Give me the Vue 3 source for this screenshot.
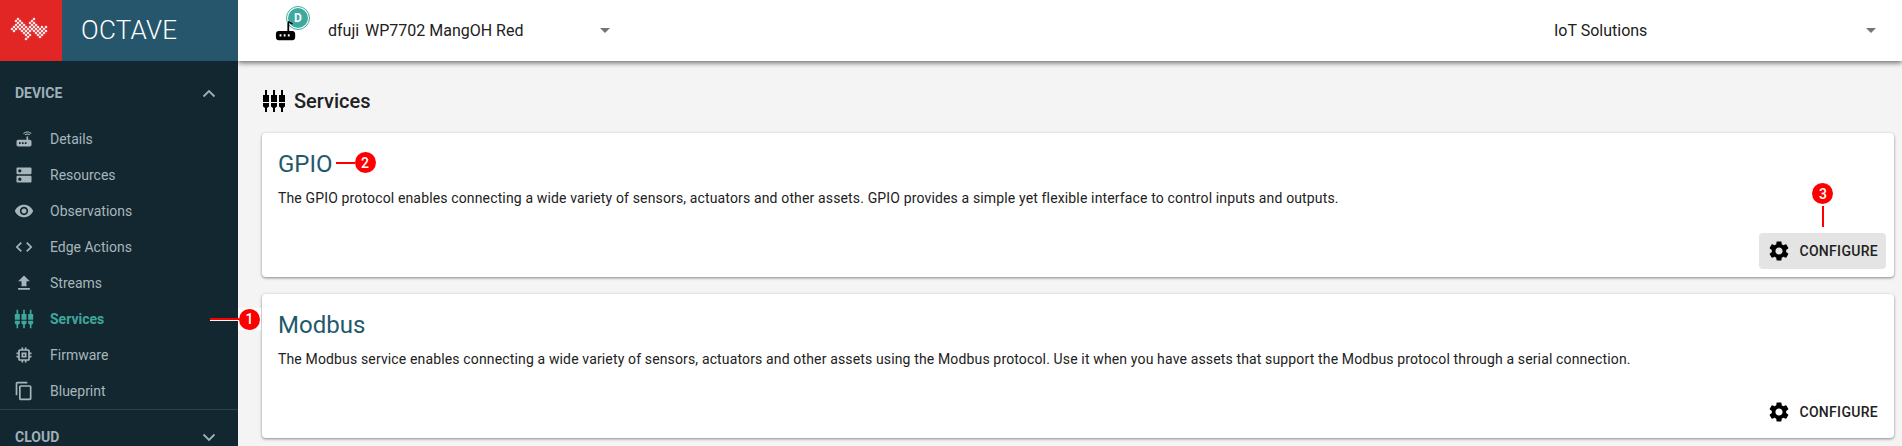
<script setup>
const deviceItems = [
  { label: 'Details', icon: 'router' },
  { label: 'Resources', icon: 'dns' },
  { label: 'Observations', icon: 'eye' },
  { label: 'Edge Actions', icon: 'code' },
  { label: 'Streams', icon: 'upload' },
  { label: 'Services', icon: 'services', active: true },
  { label: 'Firmware', icon: 'chip' },
  { label: 'Blueprint', icon: 'copy' },
];

// trois curseurs : tige, bloc, puis bas effile
const sliderPath = [4, 12, 20]
  .map((c) => `M${c - 1} 1h2v5h2v7h-6V6h2zM${c - 3} 14h6v3.5l-2 1.5v4h-2v-4l-2-1.5z`)
  .join('');

const icons = {
  router: 'M20.2 5.9l.8-.8C19.6 3.7 17.8 3 16 3s-3.6.7-5 2.1l.8.8C13 4.8 14.5 4.2 16 4.2s3 .6 4.2 1.7zm-.9.8c-.9-.9-2.1-1.4-3.3-1.4s-2.4.5-3.3 1.4l.8.8c.7-.7 1.6-1 2.5-1s1.8.3 2.5 1l.8-.8zM19 13h-2V9h-2v4H5c-1.1 0-2 .9-2 2v4c0 1.1.9 2 2 2h14c1.1 0 2-.9 2-2v-4c0-1.1-.9-2-2-2zM8 18H6v-2h2v2zm3.5 0h-2v-2h2v2zm3.5 0h-2v-2h2v2z',
  dns: 'M20 13H4c-.55 0-1 .45-1 1v6c0 .55.45 1 1 1h16c.55 0 1-.45 1-1v-6c0-.55-.45-1-1-1zM7 19c-1.1 0-2-.9-2-2s.9-2 2-2 2 .9 2 2-.9 2-2 2zM20 3H4c-.55 0-1 .45-1 1v6c0 .55.45 1 1 1h16c.55 0 1-.45 1-1V4c0-.55-.45-1-1-1zM7 9c-1.1 0-2-.9-2-2s.9-2 2-2 2 .9 2 2-.9 2-2 2z',
  eye: 'M12 4.5C7 4.5 2.73 7.61 1 12c1.73 4.39 6 7.5 11 7.5s9.27-3.11 11-7.5c-1.73-4.39-6-7.5-11-7.5zM12 17c-2.76 0-5-2.24-5-5s2.24-5 5-5 5 2.24 5 5-2.24 5-5 5zm0-8c-1.66 0-3 1.34-3 3s1.34 3 3 3 3-1.34 3-3-1.34-3-3-3z',
  code: 'M9.4 16.6L4.8 12l4.6-4.6L8 6l-6 6 6 6 1.4-1.4zm5.2 0l4.6-4.6-4.6-4.6L16 6l6 6-6 6-1.4-1.4z',
  upload: 'M9 16h6v-6h4l-7-7-7 7h4zm-4 2h14v2H5z',
  services: sliderPath,
  chip: 'M15 9H9v6h6V9zm-2 4h-2v-2h2v2zm8-2V9h-2V7c0-1.100-.9-2-2-2h-2V3h-2v2h-2V3H9v2H7c-1.100 0-2 .9-2 2v2H3v2h2v2H3v2h2v2c0 1.100.9 2 2 2h2v2h2v-2h2v2h2v-2h2c1.100 0 2-.9 2-2v-2h2v-2h-2v-2h2zm-4 6H7V7h10v10z',
  copy: 'M16 1H4c-1.100 0-2 .9-2 2v14h2V3h12V1zm3 4H8c-1.100 0-2 .9-2 2v14c0 1.100.9 2 2 2h11c1.100 0 2-.9 2-2V7c0-1.100-.9-2-2-2zm0 16H8V7h11v14z',
  gear: 'M19.140 12.940c.04-.3.06-.61.06-.94 0-.32-.02-.64-.07-.94l2.030-1.580c.18-.14.23-.41.12-.61l-1.920-3.320c-.12-.22-.37-.29-.59-.22l-2.390.96c-.5-.38-1.030-.7-1.620-.94l-.36-2.540c-.04-.24-.24-.41-.48-.41h-3.840c-.24 0-.43.17-.47.41l-.36 2.540c-.59.24-1.130.57-1.620.94l-2.390-.96c-.22-.08-.47 0-.59.22L2.740 8.870c-.12.21-.08.47.12.61l2.030 1.580c-.05.3-.09.63-.09.94s.02.64.07.94l-2.030 1.580c-.18.14-.23.41-.12.61l1.920 3.320c.12.22.37.29.59.22l2.390-.96c.5.38 1.030.7 1.620.94l.36 2.540c.05.24.24.41.48.41h3.840c.24 0 .44-.17.47-.41l.36-2.540c.59-.24 1.130-.56 1.620-.94l2.390.96c.22.08.47 0 .59-.22l1.920-3.320c.12-.22.07-.47-.12-.61l-2.010-1.580zM12 15.600c-1.980 0-3.600-1.620-3.600-3.600s1.620-3.600 3.600-3.600 3.600 1.620 3.600 3.600-1.620 3.600-3.600 3.600z',
};

const services = [
  {
    name: 'GPIO',
    text: 'The GPIO protocol enables connecting a wide variety of sensors, actuators and other assets. GPIO provides a simple yet flexible interface to control inputs and outputs.',
    hovered: true,
  },
  {
    name: 'Modbus',
    text: 'The Modbus service enables connecting a wide variety of sensors, actuators and other assets using the Modbus protocol. Use it when you have assets that support the Modbus protocol through a serial connection.',
  },
];

// logo : damier de losanges le long d'une ligne en zigzag
const zigzag = [[12, 30], [19, 23], [27, 34], [33, 23], [40, 34], [48, 27]];
const centerAt = (x) => {
  for (let i = 1; i < zigzag.length; i++) {
    const [x0, y0] = zigzag[i - 1];
    const [x1, y1] = zigzag[i];
    if (x <= x1) return y0 + ((y1 - y0) * (x - x0)) / (x1 - x0);
  }
  return 27;
};
const logoDots = [];
for (let col = 0; col <= 18; col++) {
  const x = 12 + col * 2;
  const half = Math.min(6.5, 1.5 + Math.min(col, 18 - col) * 1.8);
  for (let y = col % 2 ? 15 : 13; y < 44; y += 4) {
    if (Math.abs(y - centerAt(x)) <= half) logoDots.push({ x, y });
  }
}
</script>

<template>
  <div class="app">
    <aside class="sidebar">
      <div class="brand">
        <div class="logo">
          <svg width="62" height="61" viewBox="0 0 62 61">
            <rect
              v-for="(d, i) in logoDots"
              :key="i"
              :x="d.x - 1.05"
              :y="d.y - 1.05"
              width="2.1"
              height="2.1"
              :transform="`rotate(45 ${d.x} ${d.y})`"
              fill="#fff"
            />
          </svg>
        </div>
        <div class="brand-name">OCTAVE</div>
      </div>

      <div class="section-head device-head">
        <span>DEVICE</span>
        <svg class="chev" width="14" height="9" viewBox="0 0 14 9"><path d="M1.500 7.500L7 2l5.500 5.500" /></svg>
      </div>
      <nav class="nav">
        <div v-for="item in deviceItems" :key="item.label" class="nav-item" :class="{ active: item.active }">
          <svg class="nav-icon" width="20" height="20" viewBox="0 0 24 24"><path :d="icons[item.icon]" /></svg>
          <span>{{ item.label }}</span>
          <div v-if="item.active" class="callout callout-1">
            <i class="line"></i><b class="dot">1</b>
          </div>
        </div>
      </nav>
      <div class="section-head cloud">
        <span>CLOUD</span>
        <svg class="chev" width="14" height="9" viewBox="0 0 14 9"><path d="M1.500 1.500L7 7l5.500-5.500" /></svg>
      </div>
    </aside>

    <div class="main">
      <header class="topbar">
        <div class="device">
          <div class="device-icon">
            <span class="avatar"><span>D</span></span>
            <svg class="router" width="22" height="22" viewBox="0 0 24 24"><path d="M14.500 1l5 2.500-.8 1.500-3.200-1.600V12H19c1.700 0 3 1.300 3 3v4c0 1.700-1.300 3-3 3H4c-1.700 0-3-1.300-3-3v-4c0-1.700 1.300-3 3-3h9.500V4z M7 15.500H5v2.500h2zm4.500 0h-2v2.500h2zm4.500 0h-2v2.500h2z" fill-rule="evenodd" /></svg>
          </div>
          <span class="user">dfuji</span>
          <span class="device-name">WP7702 MangOH Red</span>
          <i class="caret"></i>
        </div>
        <div class="company">
          <span>IoT Solutions</span>
          <i class="caret"></i>
        </div>
      </header>

      <main class="content">
        <h1 class="title">
          <svg width="24" height="24" viewBox="0 0 24 24"><path :d="icons.services" /></svg>
          Services
        </h1>

        <section v-for="service in services" :key="service.name" class="card">
          <h2>
            {{ service.name }}
            <span v-if="service.hovered" class="callout-2"><i class="line"></i><b class="dot">2</b></span>
          </h2>
          <p>{{ service.text }}</p>
          <div class="actions">
            <button :class="{ hovered: service.hovered }">
              <svg width="24" height="24" viewBox="0 0 24 24"><path :d="icons.gear" /></svg>
              CONFIGURE
              <span v-if="service.hovered" class="callout-3"><b class="dot">3</b><i class="line"></i></span>
            </button>
          </div>
        </section>
      </main>
    </div>
  </div>
</template>

<style>
html, body {
  margin: 0;
  overflow: hidden;
  background: #f4f4f4;
}
</style>

<style scoped>
.app {
  display: flex;
  height: 446px;
  overflow: hidden;
  font-family: Roboto, "Liberation Sans", sans-serif;
  color: #212121;
}

.sidebar {
  position: relative;
  z-index: 2;
  width: 238px;
  flex: none;
  background: #132730;
  color: #a7b6bc;
}

.brand {
  display: flex;
  height: 61px;
  background: #25566b;
}

.logo {
  width: 62px;
  background: #e22525;
}

.brand-name {
  margin-left: 19px;
  color: #fff;
  font-size: 26px;
  font-weight: 300;
  line-height: 61px;
  letter-spacing: 0.3px;
}

.section-head {
  display: flex;
  justify-content: space-between;
  align-items: center;
  height: 48px;
  padding: 0 22px 0 15px;
  font-size: 14px;
  font-weight: 700;
  color: #9db0b9;
}

.device-head {
  height: 56px;
  padding-top: 4px;
}

.chev {
  fill: none;
  stroke: #9db0b9;
  stroke-width: 1.8;
}

.nav {
  border-bottom: 1px solid #2c3e46;
}

.nav-item {
  position: relative;
  display: flex;
  align-items: center;
  height: 36px;
  padding-left: 14px;
  font-size: 14px;
}

.nav-icon {
  flex: none;
  margin-right: 16px;
  fill: #a7b6bc;
}

.nav-item.active {
  color: #3fa89c;
  font-weight: 700;
}

.nav-item.active .nav-icon {
  fill: #3fa89c;
}

.section-head.cloud {
  height: 54px;
}

.main {
  flex: 1;
  min-width: 0;
  display: flex;
  flex-direction: column;
}

.topbar {
  position: relative;
  z-index: 1;
  display: flex;
  flex: none;
  height: 61px;
  background: #fff;
  box-shadow: 0 2px 5px rgba(0, 0, 0, 0.55);
  font-size: 16px;
}

.device,
.company {
  display: flex;
  align-items: center;
}

.device {
  width: 378px;
  padding-left: 38px;
  box-sizing: border-box;
}

.device-icon {
  position: relative;
  width: 52px;
  height: 61px;
  flex: none;
}

.avatar {
  position: absolute;
  left: 12px;
  top: 8px;
  width: 20px;
  height: 20px;
  border-radius: 50%;
  background: #3fa9a0;
  outline: 1px solid #3fa9a0;
  outline-offset: 1.5px;
  color: #fff;
  font-size: 12px;
  font-weight: 700;
  display: flex;
  align-items: center;
  justify-content: center;
}

.router {
  position: absolute;
  left: -1px;
  top: 20px;
  fill: #000;
}

.user {
  width: 37px;
  flex: none;
}

.device-name {
  flex: 1;
}

.caret {
  width: 0;
  height: 0;
  border-left: 5px solid transparent;
  border-right: 5px solid transparent;
  border-top: 5px solid #757575;
  margin-right: 6px;
}

.company {
  flex: 1;
  justify-content: space-between;
  padding-left: 938px;
  padding-right: 20px;
}

.content {
  flex: 1;
  padding: 0 8px 0 24px;
}

.title {
  display: flex;
  align-items: center;
  gap: 8px;
  height: 64px;
  margin: 0;
  padding-top: 8px;
  font-size: 20px;
  font-weight: 500;
}

.card {
  position: relative;
  height: 144px;
  margin-bottom: 17px;
  padding: 15px 16px 0;
  box-sizing: border-box;
  background: #fff;
  border-radius: 4px;
  box-shadow: 0 1px 3px rgba(0, 0, 0, 0.45);
}

.card h2 {
  position: relative;
  display: inline-block;
  margin: 0;
  font-size: 24px;
  font-weight: 400;
  line-height: 32px;
  color: #1f5a6b;
}

.card p {
  margin: 8px 0 0;
  font-size: 14px;
  line-height: 20px;
  letter-spacing: 0.145px;
}

.actions {
  position: absolute;
  right: 8px;
  bottom: 8px;
}

button {
  position: relative;
  display: flex;
  align-items: center;
  gap: 8px;
  height: 36px;
  padding: 0 8px;
  border: none;
  border-radius: 4px;
  background: transparent;
  color: #212121;
  font-family: inherit;
  font-size: 14px;
  font-weight: 500;
  letter-spacing: 0.3px;
}

button.hovered {
  background: #e4e4e4;
}

.dot {
  display: flex;
  align-items: center;
  justify-content: center;
  flex: none;
  width: 21px;
  height: 21px;
  border-radius: 50%;
  background: #ff0000;
  color: #fff;
  font-size: 14px;
  font-weight: 500;
  letter-spacing: 0;
}

.line {
  display: block;
  background: #ff0000;
}

.callout {
  position: absolute;
  left: 210px;
  top: 7px;
  height: 22px;
  display: flex;
  align-items: center;
  background: linear-gradient(to right, transparent 28px, #fff 28px);
  padding-right: 1px;
}

.callout-1 .line {
  width: 29px;
  height: 2px;
  box-shadow: 0 1px 0 #fff;
}

.callout-2 {
  position: absolute;
  left: 100%;
  top: 4px;
  margin-left: 3px;
  display: flex;
  align-items: center;
}

.callout-2 .line {
  width: 19px;
  height: 2px;
}

.callout-3 {
  position: absolute;
  left: 53px;
  bottom: 42px;
  display: flex;
  flex-direction: column;
  align-items: center;
  gap: 2px;
}

.callout-3 .line {
  width: 2px;
  height: 21px;
}
</style>
